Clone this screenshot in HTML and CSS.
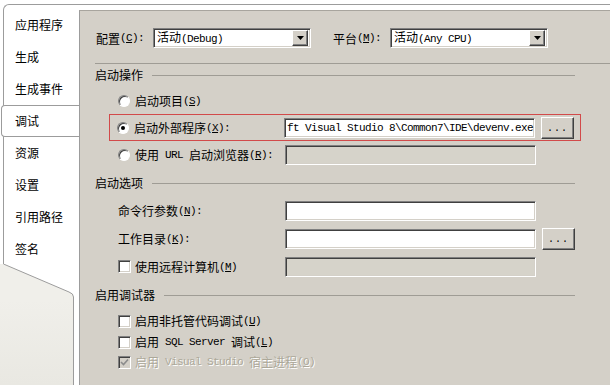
FILE: index.html
```html
<!DOCTYPE html>
<html lang="zh-CN">
<head>
    <meta charset="UTF-8">
    <title>调试</title>
    <link rel="stylesheet" href="styles.css">
</head>
<body>
    <div class="page">
        <div class="sidebar">
            <ul class="tabs">
                <li>应用程序</li>
                <li>生成</li>
                <li>生成事件</li>
                <li class="active">调试</li>
                <li>资源</li>
                <li>设置</li>
                <li>引用路径</li>
                <li>签名</li>
            </ul>
            <svg class="tail" width="79" height="36" viewBox="0 0 79 36">
                <rect x="0" y="0" width="79" height="36" fill="#f0efea"/>
                <path d="M3.5 0 L79 0 L79 36 L73.5 36 L73.5 33 Q73.5 29.5 69 28 Z" fill="#fff"/>
                <path d="M3.5 0 L69 28 Q73.5 29.5 73.5 33 L73.5 36" fill="none" stroke="#9c9c9c"/>
            </svg>
            <div class="rest"><div class="edge"></div></div>
        </div>
        <div class="main">
            <div class="panel">
                <div class="config">
                    <span class="lbl">配置<span class="en">(<u>C</u>):</span></span>
                    <div class="combo field">
                        <span>活动<span class="en">(Debug)</span></span>
                        <span class="arrow"><svg width="7" height="4" viewBox="0 0 7 4"><path d="M0 0 H7 L3.5 4 Z" fill="#000"/></svg></span>
                    </div>
                    <span class="lbl second">平台<span class="en">(<u>M</u>):</span></span>
                    <div class="combo field">
                        <span>活动<span class="en">(Any CPU)</span></span>
                        <span class="arrow"><svg width="7" height="4" viewBox="0 0 7 4"><path d="M0 0 H7 L3.5 4 Z" fill="#000"/></svg></span>
                    </div>
                </div>

                <div class="sep"></div>

                <div class="group first">启动操作</div>
                <div class="row r-start">
                    <span class="radio"></span>启动项目<span class="en">(<u>S</u>)</span>
                </div>
                <div class="redbox">
                    <span class="lbl"><span class="radio on"></span>启动外部程序<span class="en">(<u>X</u>):</span></span>
                    <div class="input field path"><span class="en">ft Visual Studio 8\Common7\IDE\devenv.exe</span></div>
                    <span class="more">...</span>
                </div>
                <div class="row r-url">
                    <span class="lbl"><span class="radio"></span>使用<span class="en"> URL </span>启动浏览器<span class="en">(<u>R</u>):</span></span>
                    <div class="input field off"></div>
                </div>

                <div class="group">启动选项</div>
                <div class="row r-args">
                    <span class="lbl">命令行参数<span class="en">(<u>N</u>):</span></span>
                    <div class="input field"></div>
                </div>
                <div class="row r-dir">
                    <span class="lbl">工作目录<span class="en">(<u>K</u>):</span></span>
                    <div class="input field"></div>
                    <span class="more">...</span>
                </div>
                <div class="row r-remote">
                    <span class="lbl"><span class="check"></span>使用远程计算机<span class="en">(<u>M</u>)</span></span>
                    <div class="input field off"></div>
                </div>

                <div class="group">启用调试器</div>
                <div class="row r-native">
                    <span class="check"></span>启用非托管代码调试<span class="en">(<u>U</u>)</span>
                </div>
                <div class="row r-sql">
                    <span class="check"></span>启用<span class="en"> SQL Server </span>调试<span class="en">(<u>L</u>)</span>
                </div>
                <div class="row r-host disabled">
                    <span class="check dis"><svg width="9" height="9" viewBox="0 0 9 9"><path d="M1 4 L3.5 6.5 L8 1.5" fill="none" stroke="#8c8c8c" stroke-width="1.6"/></svg></span>启用<span class="en"> Visual Studio </span>宿主进程<span class="en">(<u>O</u>)</span>
                </div>
            </div>
        </div>
    </div>
</body>
</html>
```

FILE: styles.css
```css
* {
    margin: 0;
    padding: 0;
    box-sizing: border-box;
}

body {
    width: 610px;
    height: 385px;
    overflow: hidden;
    background: #fff;
    font-family: "Noto Sans CJK SC", sans-serif;
    font-size: 12px;
    color: #000;
}

.en {
    font-family: "Liberation Mono", monospace;
    font-size: 11px;
    letter-spacing: -0.6px;
    white-space: pre;
}

u {
    text-underline-offset: 1px;
}

.page {
    display: flex;
    margin-top: 4px;
    height: 381px;
}

/* left tab strip */
.sidebar {
    width: 79px;
    padding-left: 3px;
    display: flex;
    flex-direction: column;
    background: #fff;
}

.tabs {
    list-style: none;
    height: 260px;
    background: #fff;
    border-top: 1px solid #9c9c9c;
    border-left: 1px solid #9c9c9c;
    border-top-left-radius: 6px;
    padding-top: 4px;
}

.tabs li {
    height: 32px;
    line-height: 32px;
    padding-left: 11px;
}

.tabs li.active {
    margin-left: -3px;
    border: 1px solid #9c9c9c;
    border-right: none;
    border-radius: 4px 0 0 4px;
    line-height: 30px;
    padding-left: 13px;
    background: #fff;
}

.tail {
    display: block;
    margin-left: -3px;
}

.rest {
    flex: 1;
    margin-left: -3px;
    display: flex;
    justify-content: flex-end;
    background: linear-gradient(#f0efea, #e9e8e2);
}

.edge {
    width: 6px;
    background: #fff;
    border-left: 1px solid #9c9c9c;
}

/* property panel */
.main {
    flex: 1;
    display: flex;
    border-top: 1px solid #9c9c9c;
    padding-top: 5px;
}

.panel {
    flex: 1;
    background: #d4d0c8;
    border-top: 1px solid #a8a59e;
    border-left: 1px solid #9c9c9c;
    padding-left: 15px;
}

.field {
    background: #fff;
    border: 1px solid;
    border-color: #808080 #fff #fff #808080;
    box-shadow: inset 1px 1px #404040, inset -1px -1px #d4d0c8;
}

.config {
    display: flex;
    align-items: center;
    height: 20px;
    margin-top: 17px;
}

.config .lbl {
    width: 58px;
    padding-left: 1px;
    white-space: nowrap;
}

.config .second {
    margin-left: 22px;
    width: 57px;
    padding-left: 0;
}

.combo {
    width: 158px;
    height: 20px;
    display: flex;
    align-items: center;
    padding-left: 3px;
    padding-right: 2px;
    line-height: 16px;
}

.arrow {
    margin-left: auto;
    width: 16px;
    height: 16px;
    display: flex;
    align-items: center;
    justify-content: center;
    background: #d4d0c8;
    border: 1px solid;
    border-color: #fff #404040 #404040 #fff;
    box-shadow: inset -1px -1px #808080;
}

.sep {
    height: 1px;
    margin-top: 15px;
    background: #9f9c95;
}

.group {
    display: flex;
    align-items: center;
    height: 16px;
    margin-top: 10px;
    width: 480px;
    line-height: 16px;
}

.group.first {
    margin-top: 3px;
}

.group::after {
    content: "";
    flex: 1;
    height: 1px;
    margin-left: 9px;
    background: #9f9c95;
}

.row {
    display: flex;
    align-items: center;
    height: 20px;
    margin-left: 23px;
    line-height: 16px;
    white-space: nowrap;
}

.lbl {
    width: 167px;
    display: flex;
    align-items: center;
    white-space: nowrap;
}

.radio {
    flex: none;
    width: 12px;
    height: 12px;
    margin-right: 5px;
    border-radius: 50%;
    background: #fff;
    border: 1px solid;
    border-color: #808080 #fff #fff #808080;
    box-shadow: inset 1px 1px #404040;
    display: flex;
    align-items: center;
    justify-content: center;
}

.radio.on::after {
    content: "";
    width: 4px;
    height: 4px;
    border-radius: 50%;
    background: #000;
}

.check {
    flex: none;
    width: 13px;
    height: 13px;
    margin-right: 4px;
    background: #fff;
    border: 1px solid;
    border-color: #808080 #fff #fff #808080;
    box-shadow: inset 1px 1px #404040, inset -1px -1px #d4d0c8;
    display: flex;
    align-items: center;
    justify-content: center;
}

.check.dis {
    background: #d4d0c8;
}

.input {
    flex: none;
    width: 251px;
    height: 20px;
}

.input.off {
    background: #d6d3ca;
}

.path {
    display: flex;
    align-items: center;
    overflow: hidden;
    padding-left: 2px;
}

.more {
    flex: none;
    width: 33px;
    height: 22px;
    margin-left: 6px;
    background: #d4d0c8;
    border: 1px solid;
    border-color: #fff #404040 #404040 #fff;
    box-shadow: inset -1px -1px #808080;
    font-family: "Liberation Mono", monospace;
    font-size: 10px;
    line-height: 22px;
    text-align: center;
    letter-spacing: 1px;
}

.redbox {
    display: flex;
    align-items: center;
    width: 472px;
    height: 27px;
    margin-top: 3px;
    margin-left: 14px;
    padding-left: 7px;
    border: 1px solid #d24a4a;
}

.r-start {
    margin-top: 8px;
}

.r-url {
    margin-top: 3px;
    height: 21px;
}

.r-args {
    margin-top: 10px;
}

.r-dir {
    margin-top: 7px;
    height: 22px;
}

.r-remote {
    margin-top: 6px;
    height: 21px;
}

.r-native {
    margin-top: 8px;
}

.r-sql {
    margin-top: 1px;
}

.disabled {
    color: #aca899;
    text-shadow: 1px 1px #fff;
}
```
